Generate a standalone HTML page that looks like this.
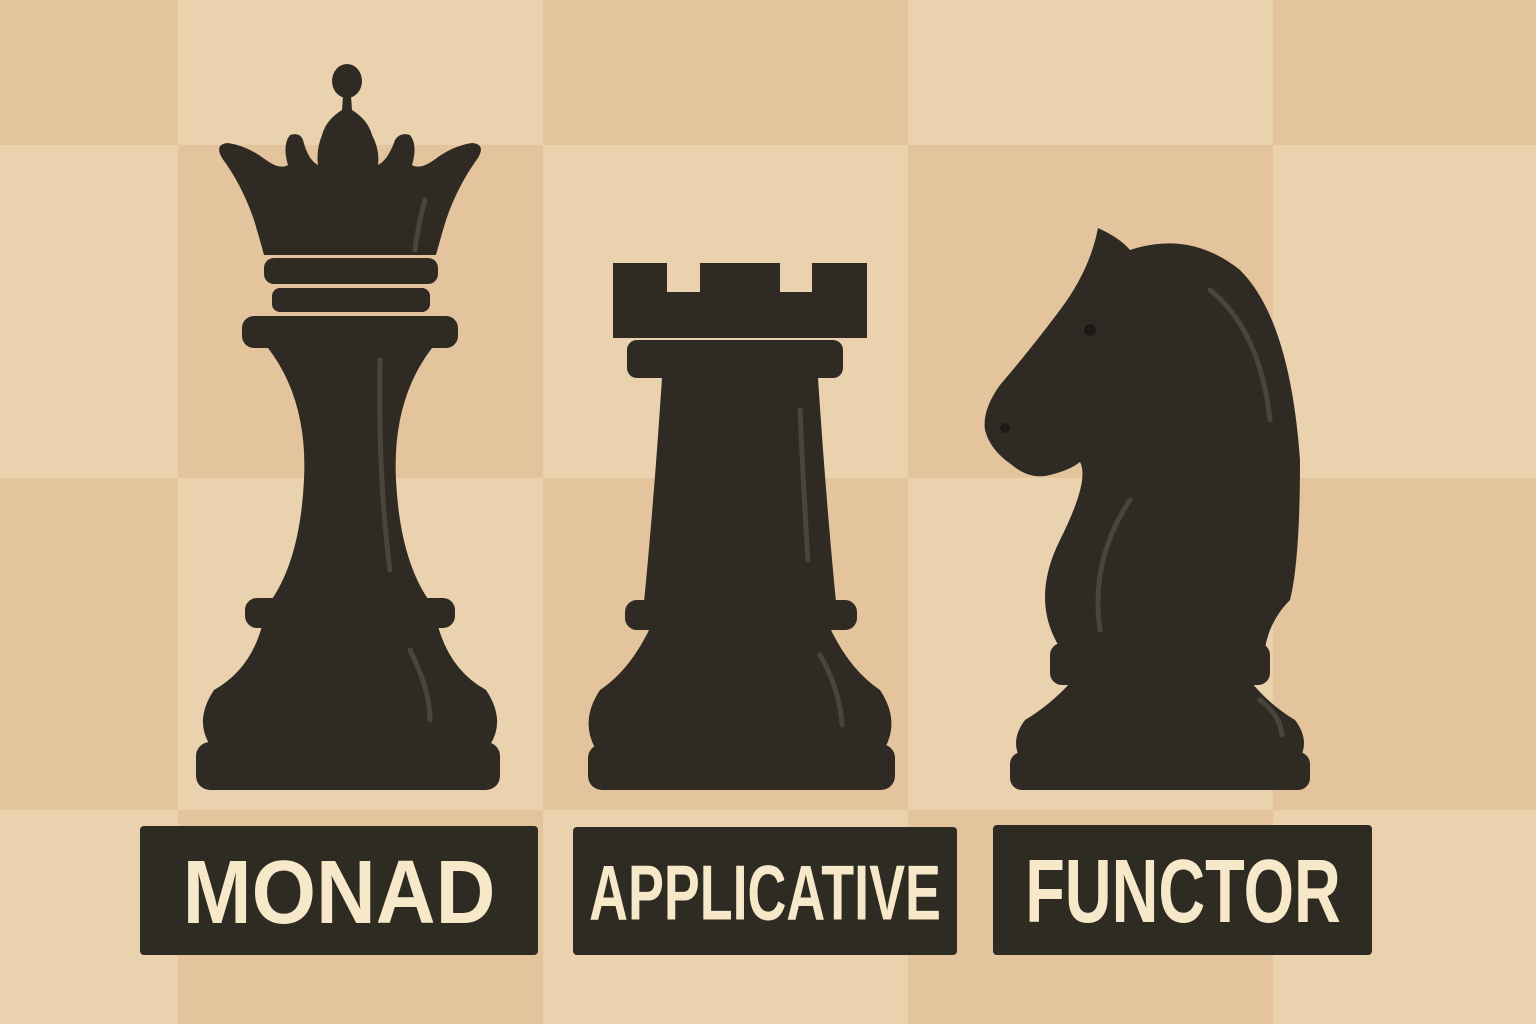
<!DOCTYPE html>
<html><head><meta charset="utf-8"><style>
html,body{margin:0;padding:0;}
body{width:1536px;height:1024px;overflow:hidden;position:relative;background:#ebd2af;}
svg{position:absolute;left:0;top:0;}
.lbl{position:absolute;background:#2e2b23;border-radius:4px;overflow:hidden;}
.lbl span{position:absolute;left:50%;top:50%;white-space:nowrap;color:#f6e8c8;font-family:"Liberation Sans",sans-serif;font-weight:bold;line-height:1;}
</style></head><body>
<svg width="1536" height="1024" viewBox="0 0 1536 1024">
<g fill="#e3c49c">
<rect x="0" y="0" width="178" height="145"/>
<rect x="543" y="0" width="365" height="145"/>
<rect x="1273" y="0" width="263" height="145"/>
<rect x="178" y="145" width="365" height="333"/>
<rect x="908" y="145" width="365" height="333"/>
<rect x="0" y="478" width="178" height="332"/>
<rect x="543" y="478" width="365" height="332"/>
<rect x="1273" y="478" width="263" height="332"/>
<rect x="178" y="810" width="365" height="214"/>
<rect x="908" y="810" width="365" height="214"/>
</g>
<g fill="#2f2b24">
<!-- Queen -->
<ellipse cx="347" cy="81" rx="15" ry="17"/>
<path d="M343 96 L351 96 L352 110 Q368 120 372 135 Q380 150 378 165 Q388 160 395 140 Q400 132 410 135 Q418 145 412 165 Q420 170 434 160 Q452 146 472 143 Q486 144 478 158 Q458 185 446 220 Q440 240 436 255 L264 255 Q260 240 254 220 Q242 185 222 158 Q214 144 228 143 Q248 146 266 160 Q280 170 288 165 Q282 145 290 135 Q300 132 303 140 Q308 160 318 165 Q316 150 322 135 Q326 120 342 110 Z"/>
<rect x="264" y="258" width="174" height="26" rx="10"/>
<rect x="272" y="288" width="158" height="24" rx="8"/>
<rect x="242" y="316" width="216" height="32" rx="12"/>
<path d="M268 348 L432 348 Q392 400 396 480 Q400 560 430 602 L270 602 Q300 560 304 480 Q308 400 268 348 Z"/>
<rect x="245" y="598" width="210" height="30" rx="12"/>
<path d="M262 626 L438 626 Q450 670 486 690 Q506 720 490 745 L210 745 Q194 720 214 690 Q250 670 262 626 Z"/>
<rect x="196" y="742" width="304" height="48" rx="14"/>
<!-- Rook -->
<path d="M613 263 L667 263 L667 292 L700 292 L700 263 L780 263 L780 292 L812 292 L812 263 L867 263 L867 338 L613 338 Z"/>
<rect x="627" y="340" width="216" height="38" rx="10"/>
<path d="M662 378 L818 378 Q826 500 836 602 L644 602 Q654 500 662 378 Z"/>
<rect x="625" y="600" width="232" height="30" rx="12"/>
<path d="M650 628 L830 628 Q850 670 880 690 Q900 720 885 748 L595 748 Q580 720 600 690 Q630 670 650 628 Z"/>
<rect x="588" y="744" width="307" height="46" rx="14"/>
<!-- Knight -->
<path d="M1098 228 Q1120 238 1130 250 Q1190 230 1240 270 Q1290 320 1300 460 Q1300 560 1290 600 Q1270 620 1265 648 L1060 648 Q1030 600 1060 540 Q1090 480 1080 462 Q1070 470 1050 475 Q1030 480 1012 465 Q990 450 985 430 Q982 410 1000 385 Q1030 350 1060 310 Q1090 270 1098 228 Z"/>
<rect x="1050" y="643" width="220" height="42" rx="12"/>
<path d="M1070 683 L1252 683 Q1270 705 1295 720 Q1310 740 1300 758 L1020 758 Q1010 740 1025 720 Q1050 705 1070 683 Z"/>
<rect x="1010" y="752" width="300" height="38" rx="12"/>
</g>
<g fill="none" stroke="#4d483d" stroke-width="5" stroke-linecap="round" opacity="0.9">
<path d="M415 250 Q418 225 425 200"/>
<path d="M380 360 Q378 480 390 570"/>
<path d="M800 410 Q804 500 808 560"/>
<path d="M1210 290 Q1260 330 1270 420"/>
<path d="M1130 500 Q1090 560 1100 630"/>
<path d="M820 655 Q840 690 842 725"/>
<path d="M410 650 Q430 690 430 720"/>
<path d="M1260 700 Q1280 715 1282 735"/>
</g>
<g fill="#1c1a15">
<circle cx="1090" cy="330" r="6"/>
<circle cx="1005" cy="428" r="5"/>
</g>
</svg>
<div class="lbl" style="left:140px;top:826px;width:398px;height:129px;"><span style="font-size:90px;transform:translate(-50%,-48%) scaleX(0.92);">MONAD</span></div>
<div class="lbl" style="left:573px;top:827px;width:384px;height:128px;"><span style="font-size:78px;transform:translate(-50%,-48%) scaleX(0.69);">APPLICATIVE</span></div>
<div class="lbl" style="left:993px;top:825px;width:379px;height:130px;"><span style="font-size:90px;transform:translate(-50%,-48%) scaleX(0.72);">FUNCTOR</span></div>
</body></html>
